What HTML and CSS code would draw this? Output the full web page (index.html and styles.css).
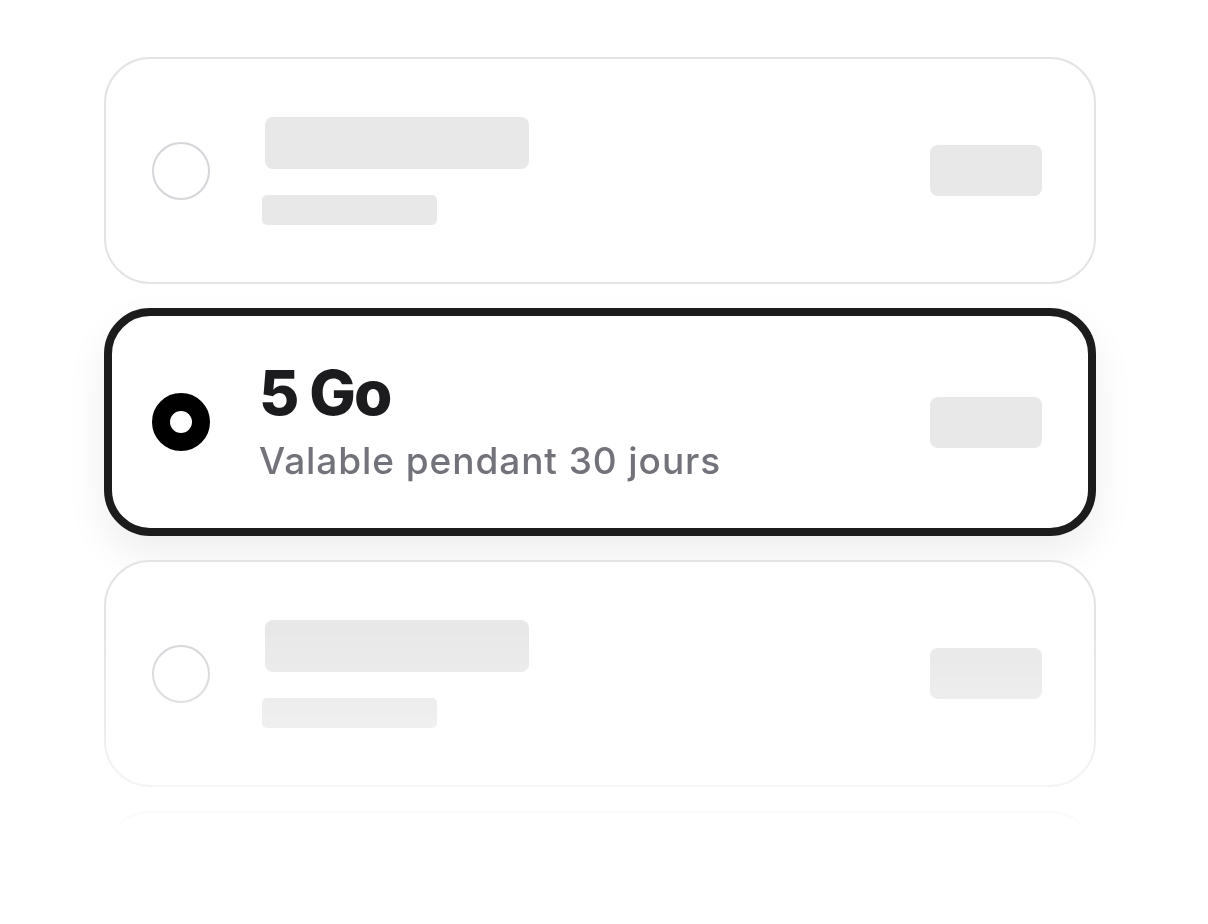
FILE: index.html
```html
<!DOCTYPE html>
<html lang="fr">
<head>
<meta charset="utf-8">
<title>Forfaits</title>
<link rel="stylesheet" href="styles.css">
</head>
<body>
<div class="list">
  <div class="card">
    <span class="radio"></span>
    <div class="skel-lines">
      <span class="skel skel-title"></span>
      <span class="skel skel-sub"></span>
    </div>
    <span class="skel skel-price"></span>
  </div>
  <div class="card card-selected">
    <span class="radio radio-on"></span>
    <div class="texts">
      <div class="title">5 Go</div>
      <div class="subtitle">Valable pendant 30 jours</div>
    </div>
    <span class="skel skel-price"></span>
  </div>
  <div class="card">
    <span class="radio"></span>
    <div class="skel-lines">
      <span class="skel skel-title"></span>
      <span class="skel skel-sub"></span>
    </div>
    <span class="skel skel-price"></span>
  </div>
  <div class="card">
    <span class="radio"></span>
    <div class="skel-lines">
      <span class="skel skel-title"></span>
      <span class="skel skel-sub"></span>
    </div>
    <span class="skel skel-price"></span>
  </div>
</div>
</body>
</html>
```
FILE: styles.css
```css
html, body {
  margin: 0;
  padding: 0;
  height: 924px;
  overflow: hidden;
  background: #ffffff;
  font-family: Inter, "Noto Sans", "Liberation Sans", sans-serif;
}

.list {
  display: flex;
  flex-direction: column;
  gap: 24px;
  padding: 57px 60px 0 104px;
  width: 992px;
  -webkit-mask-image: linear-gradient(to bottom, #000 0, #000 630px, rgba(0,0,0,0.65) 735px, rgba(0,0,0,0.52) 760px, rgba(0,0,0,0.22) 810px, transparent 830px);
  mask-image: linear-gradient(to bottom, #000 0, #000 630px, rgba(0,0,0,0.65) 735px, rgba(0,0,0,0.52) 760px, rgba(0,0,0,0.22) 810px, transparent 830px);
}

.card {
  box-sizing: border-box;
  width: 992px;
  height: 227px;
  flex: none;
  display: flex;
  align-items: center;
  border: 2px solid #e4e4e6;
  border-radius: 46px;
  padding: 0 52px 0 46px;
  background: #ffffff;
}

.card-selected {
  height: 228px;
  border: 8px solid #1c1c1c;
  padding: 0 46px 0 40px;
  box-shadow: 0 18px 40px rgba(0, 0, 0, 0.07);
}

.radio {
  box-sizing: border-box;
  flex: none;
  width: 58px;
  height: 58px;
  border-radius: 50%;
  border: 2px solid #d6d6da;
}

.radio-on {
  border: 18px solid #000000;
}

.skel {
  display: block;
  background: #e8e8e8;
  border-radius: 8px;
}

.skel-lines {
  display: flex;
  flex-direction: column;
  gap: 26px;
  margin-left: 52px;
}

.skel-title {
  width: 264px;
  height: 52px;
  margin-left: 3px;
}

.skel-sub {
  width: 175px;
  height: 30px;
  border-radius: 5px;
}

.skel-price {
  width: 112px;
  height: 51px;
  margin-left: auto;
}

.texts {
  margin-left: 49px;
  display: flex;
  flex-direction: column;
  gap: 17px;
}

.title {
  font-size: 62px;
  line-height: 60px;
  font-weight: 800;
  letter-spacing: -0.03em;
  color: #1c1c1e;
}

.subtitle {
  font-size: 37px;
  line-height: 42px;
  font-weight: 500;
  color: #72727a;
  letter-spacing: 0.025em;
}
```
